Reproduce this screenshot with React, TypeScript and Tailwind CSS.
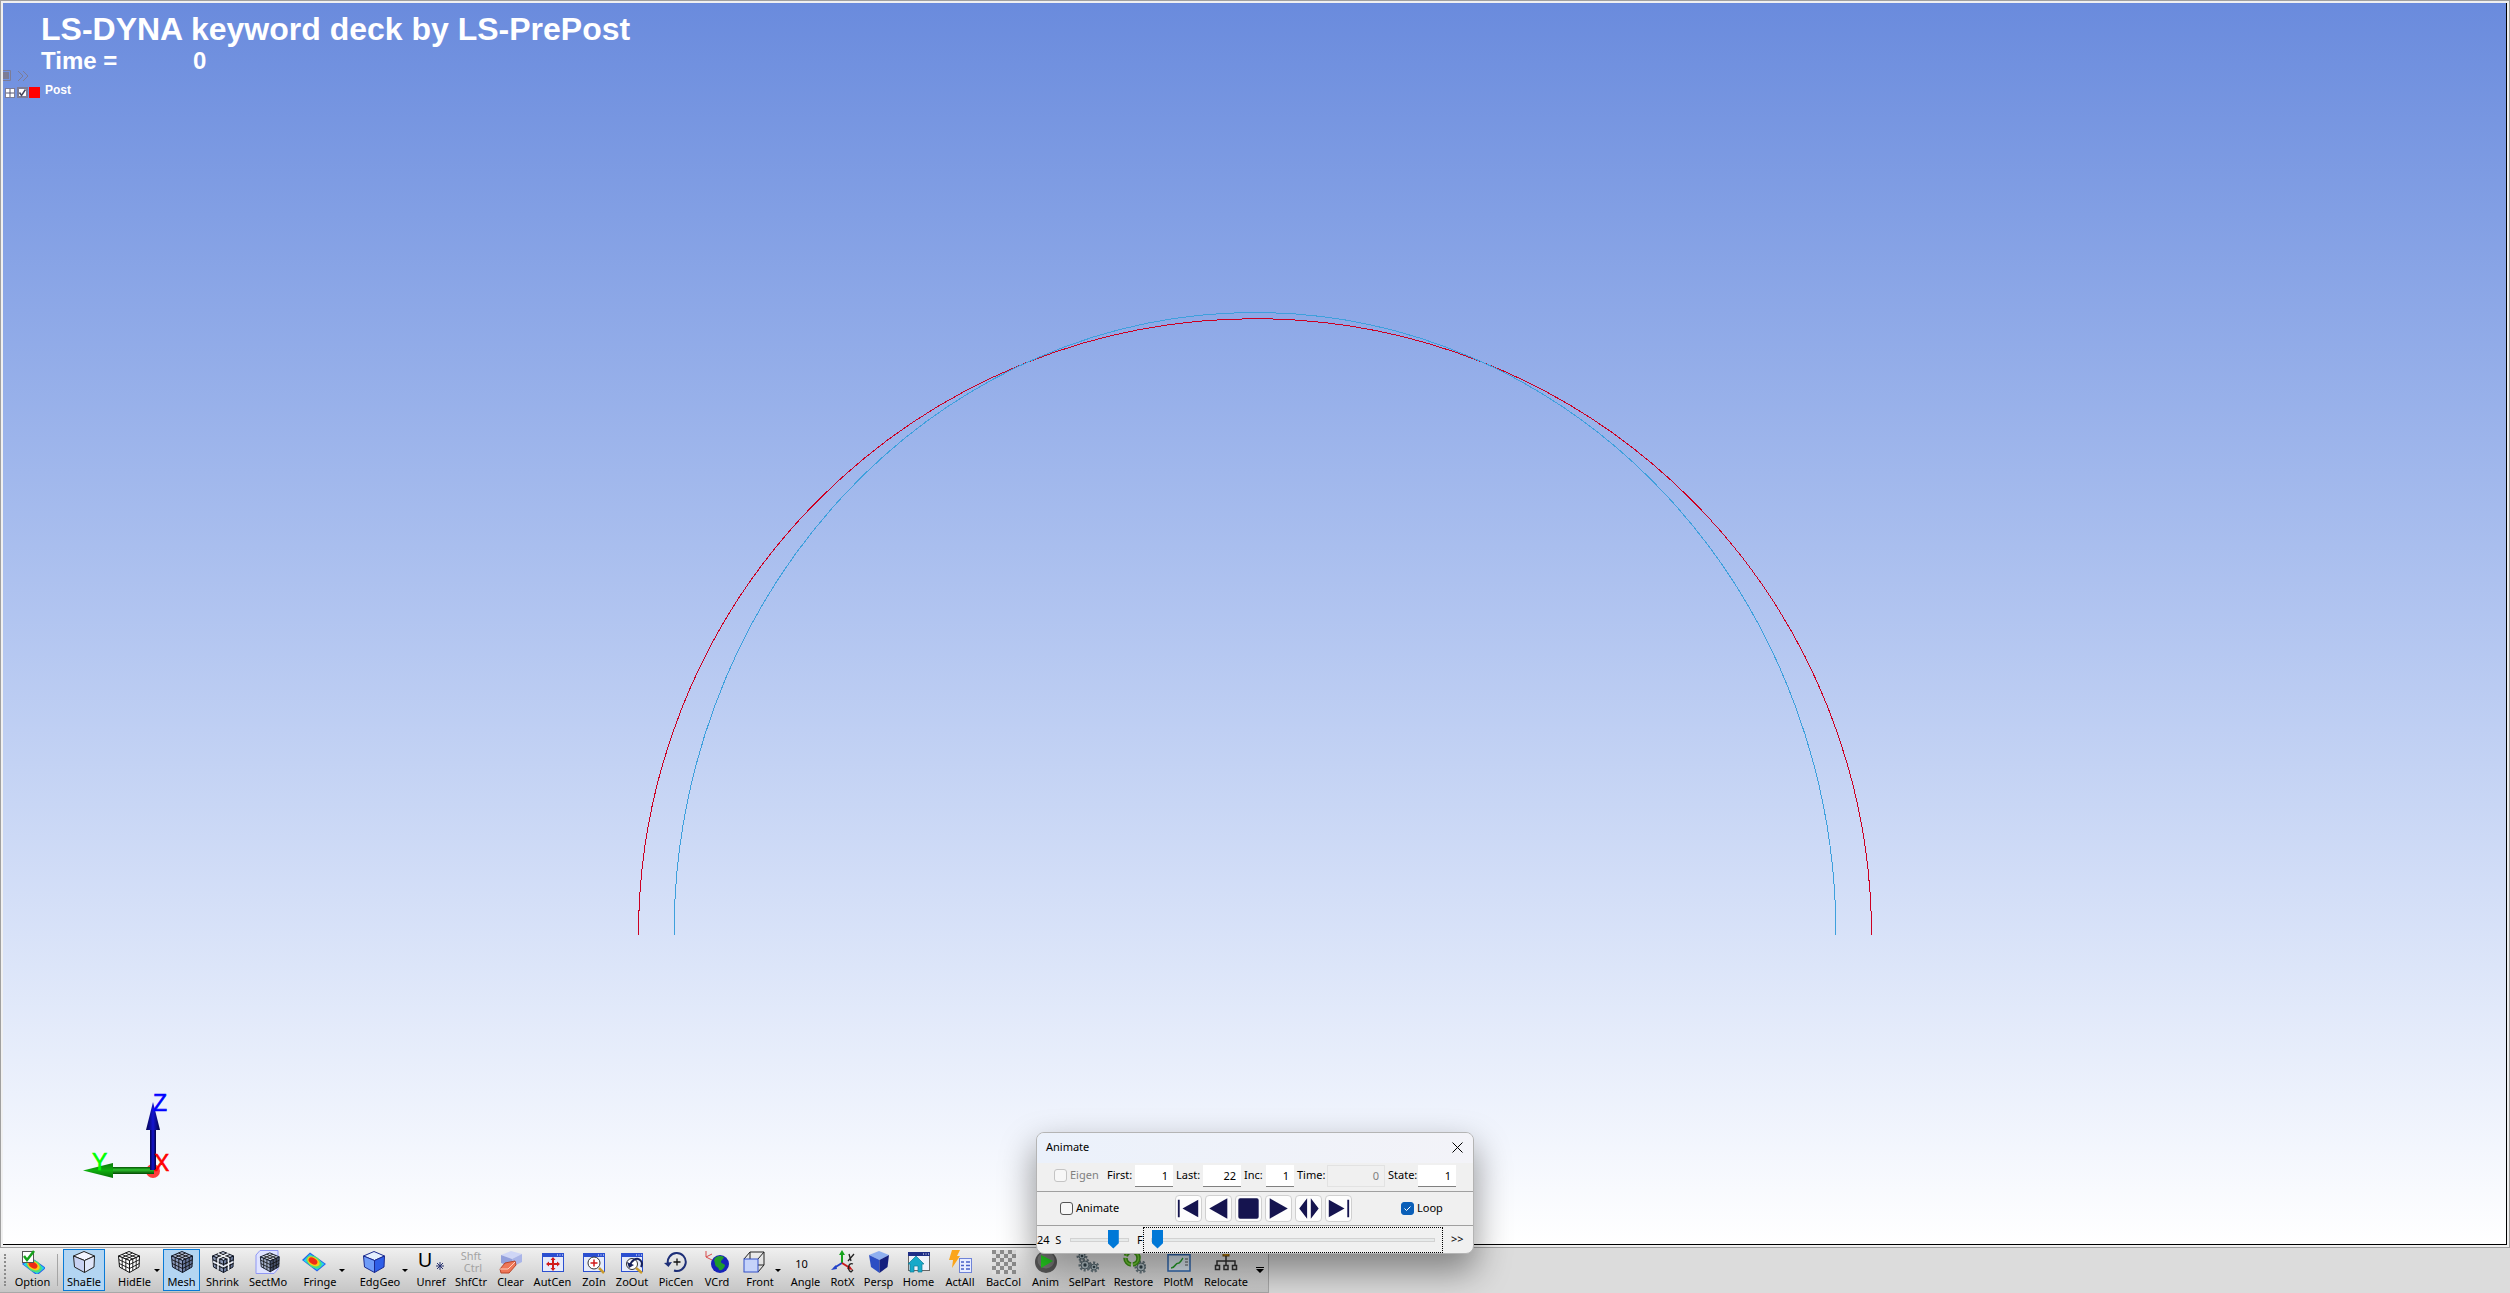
import React from "react";

type IconProps = { children: React.ReactNode };

function Svg({ children }: IconProps) {
  return (
    <svg viewBox="0 0 24 24" className="h-6 w-6" fill="none" aria-hidden="true">
      {children}
    </svg>
  );
}

function Cube({ top, left, right, line = "#111827" }: { top: string; left: string; right: string; line?: string }) {
  return (
    <g stroke={line} strokeWidth="1" strokeLinejoin="round">
      <path d="M12 1.500 22.500 6 12.500 10.500 1.500 6Z" fill={top} />
      <path d="M1.500 6 12.500 10.500V22.500L2.500 17Z" fill={left} />
      <path d="M22.500 6 12.500 10.500V22.500L22 17Z" fill={right} />
    </g>
  );
}

function CubeGrid({ line = "#111", width = 0.9 }: { line?: string; width?: number }) {
  return (
    <path
      d="M8.500 3 19.200 7.500V18.800M5 4.500 15.800 9V20.700M15.500 3 5.200 7.500V18.500M19 4.500 8.800 9V20.500M2 9.700l10.500 4.800 10-4.800M2 13.400l10.500 5.100 10-5.100"
      stroke={line}
      strokeWidth={width}
    />
  );
}

function FringePlate() {
  return (
    <g>
      <path d="M8 2.500 24 14 15 21.500 0 10Z" fill="#2563eb" />
      <path d="M8 4 22.500 14 15 20 1.500 10.500Z" fill="#22d3ee" />
      <ellipse cx="12" cy="12" rx="8.500" ry="5.500" fill="#4ade80" transform="rotate(32 12 12)" />
      <ellipse cx="11.500" cy="11.500" rx="6.800" ry="4.200" fill="#facc15" transform="rotate(32 11.500 11.500)" />
      <ellipse cx="11" cy="11" rx="4.800" ry="3" fill="#ef2b16" transform="rotate(32 11 11)" />
    </g>
  );
}

function WindowFrame({ ink }: { ink: string }) {
  return (
    <g>
      <rect x="1.500" y="3.500" width="21" height="18" fill="#e6ebfa" stroke={ink} />
      <rect x="1" y="3" width="22" height="4" fill={ink} />
      <path d="M16 5h1M18.500 5h1M21 5h1" stroke="#fff" />
    </g>
  );
}

function Gear({ x, y, r }: { x: number; y: number; r: number }) {
  return (
    <g>
      <circle cx={x} cy={y} r={r} fill="none" stroke="#6a7a82" strokeWidth="3" strokeDasharray="2 1.500" />
      <circle cx={x} cy={y} r={r - 1} fill="#b4c3c9" stroke="#5b6b73" />
      <circle cx={x} cy={y} r={r / 3} fill="#33434b" />
    </g>
  );
}

const icons: Record<string, React.ReactNode> = {
  Option: (
    <Svg>
      <g transform="translate(1 4)"><FringePlate /></g>
      <rect x="1.500" y="1.500" width="11" height="11" fill="#fff" stroke="#555" />
      <path d="m3 6 3 4 7-9" stroke="#16a31c" strokeWidth="2.500" />
    </Svg>
  ),
  ShaEle: <Svg><Cube top="#f1f4ff" left="#c9d2f2" right="#dfe5f8" line="#222" /></Svg>,
  HidEle: <Svg><Cube top="#fff" left="#fff" right="#fff" line="#111" /><CubeGrid /></Svg>,
  Mesh: <Svg><Cube top="#b3bdd6" left="#8c9abc" right="#66769c" /><CubeGrid /></Svg>,
  Shrink: (
    <Svg>
      <Cube top="#c3cce0" left="#8b99b8" right="#6d7c9f" />
      <CubeGrid />
      <path d="M7 3.500 17.500 8.500V20M17.500 3.500 7 8.500V20M2 11.700l10.500 4.800 10-4.800" stroke="#f3f4f6" strokeWidth="1.300" />
    </Svg>
  ),
  SectMo: (
    <svg viewBox="0 0 24 24" className="h-6 w-6 overflow-visible" fill="none" aria-hidden="true">
      <path d="M0 5 4 .5H22V19L18 23.500H0Z" fill="#dfe3ff" stroke="#8f97f5" />
      <g transform="translate(3 1.500) scale(.9)"><Cube top="#d3daea" left="#a4b0ca" right="#46506b" /><CubeGrid /></g>
    </svg>
  ),
  Fringe: <Svg><FringePlate /></Svg>,
  EdgGeo: <Svg><Cube top="#e4eefe" left="#6f9cf8" right="#2f5fe8" line="#1b2a8f" /></Svg>,
  Clear: (
    <Svg>
      <path d="M2 5 12 1l11 3-10 5Z" fill="#cfd6f6" />
      <path d="M2 5 13 9V17L2 13Z" fill="#93a0dc" />
      <path d="M13 9 23 4V12L13 17Z" fill="#aab5e8" />
      <path d="m6 13 10-2 1 4-7 8H2l-1-4Z" fill="#ee7759" stroke="#b8452b" />
      <path d="m1 19 8 0 7-7" stroke="#ffd0c0" />
    </Svg>
  ),
  AutCen: (
    <Svg>
      <WindowFrame ink="#2b4fd0" />
      <path d="M12 8v12M6 14h12" stroke="#d11a1a" strokeWidth="2" />
      <path d="m12 7 2.500 3h-5ZM12 21l2.500-3h-5ZM5 14l3-2.500v5ZM19 14l-3-2.500v5Z" fill="#d11a1a" />
    </Svg>
  ),
  ZoIn: (
    <Svg>
      <WindowFrame ink="#2b4fd0" />
      <circle cx="12" cy="13" r="6" fill="#fff" stroke="#333" />
      <path d="M12 9.500v7M8.500 13h7" stroke="#d11a1a" strokeWidth="1.500" />
      <path d="m17 18 5 5" stroke="#c99b2d" strokeWidth="2.500" />
    </Svg>
  ),
  ZoOut: (
    <Svg>
      <WindowFrame ink="#2b4fd0" />
      <circle cx="12" cy="14" r="5.500" fill="#fff" stroke="#333" />
      <path d="M10 16c1-6 7-9 10-6 3 2 2 5 1 7" stroke="#16205a" strokeWidth="2" />
      <path d="m7 12 2 6 5-3Z" fill="#16205a" />
      <path d="m16 18 6 5" stroke="#c99b2d" strokeWidth="2.500" />
    </Svg>
  ),
  PicCen: (
    <Svg>
      <path d="M4 14A9 9 0 1 1 10 20.500" stroke="#1e2f78" strokeWidth="2" />
      <path d="m0 13 8-1-3.500 5Z" fill="#1e2f78" />
      <path d="M13 8.500v7M9.500 12h7" stroke="#111" strokeWidth="1.300" />
    </Svg>
  ),
  VCrd: (
    <Svg>
      <path d="M1 1v6l8 4M1 7l6-3" stroke="#d94a4a" />
      <circle cx="15" cy="14" r="9" fill="#1723b8" />
      <path d="M10 8c3-3 7-2 9-1-1 3-3 3-3 5s4 1 4 4c-2 4-4 5-6 4 0-3-4-3-4-6s-2-3 0-6Z" fill="#1f9c2c" />
    </Svg>
  ),
  Front: (
    <Svg>
      <path d="m2 9 6-7h14v13l-6 7M16 9l6-7M8 2v13h14M8 15l-6 7" stroke="#222" />
      <rect x="2" y="9" width="14" height="13" fill="#c5d3fa" stroke="#3250c8" />
    </Svg>
  ),
  RotX: (
    <Svg>
      <path d="M11 13V3" stroke="#16a31c" strokeWidth="2" />
      <path d="m11 0 3 5H8Z" fill="#16a31c" />
      <path d="m11 13-8 5" stroke="#2342c9" strokeWidth="2" />
      <path d="m0 20 5-5 1 4Z" fill="#2342c9" />
      <path d="m11 13 8 5" stroke="#c91a1a" strokeWidth="2" />
      <path d="m22 20-6-1 2-4Z" fill="#c91a1a" />
      <path d="m18 4 2 7M23 4l-6 7M22 14c-5-2-6 6-2 8l2-2" stroke="#222" strokeWidth="1.300" />
    </Svg>
  ),
  Persp: (
    <Svg>
      <path d="M12 1 22 5 12.500 10 2 5Z" fill="#8fb0f0" />
      <path d="M2 5 12.500 10V23L4 17Z" fill="#2c4fc4" />
      <path d="M22 5 12.500 10V23L20.500 17Z" fill="#141f7d" />
    </Svg>
  ),
  Home: (
    <Svg>
      <rect x="1.500" y="2.500" width="21" height="18" fill="#eef1fa" stroke="#666" />
      <rect x="1" y="2" width="22" height="4" fill="#1d2d86" />
      <path d="M16 4h1M18.500 4h1M21 4h1" stroke="#fff" />
      <path d="M1 14 9 6l8 8h-2v8h-4v-6H7v6H3v-8Z" fill="#16a9c9" stroke="#0e7894" strokeWidth=".7" />
    </Svg>
  ),
  ActAll: (
    <Svg>
      <path d="m4 0 8 0-3 6h3L4 18l1-8H1Z" fill="#fba51c" />
      <rect x="11.500" y="8.500" width="12" height="14" fill="#e7ecff" stroke="#6f83d8" />
      <path d="M13 12h3M18 12h4M13 15.500h3M18 15.500h4M13 19h3M18 19h4" stroke="#4a60c8" strokeWidth="1.500" />
    </Svg>
  ),
  BacCol: (
    <svg viewBox="0 0 24 24" className="h-6 w-6" aria-hidden="true">
      <defs>
        <pattern id="checker" width="8" height="8" patternUnits="userSpaceOnUse">
          <rect width="8" height="8" fill="#dedede" />
          <rect width="4" height="4" fill="#8c8c8c" />
          <rect x="4" y="4" width="4" height="4" fill="#8c8c8c" />
        </pattern>
      </defs>
      <rect width="24" height="24" fill="url(#checker)" />
    </svg>
  ),
  Anim: (
    <Svg>
      <circle cx="12" cy="12" r="11" fill="#5b5b5b" />
      <circle cx="12" cy="10" r="8.500" fill="#7b7b7b" />
      <path d="m7 5 12 6-12 7Z" fill="#25d321" />
    </Svg>
  ),
  SelPart: <Svg><Gear x={7} y={6} r={4} /><Gear x={10} y={15} r={5} /><Gear x={19} y={17} r={4} /></Svg>,
  Restore: (
    <Svg>
      <Gear x={19} y={17} r={5} />
      <circle cx="10" cy="8" r="6.500" stroke="#3f9a16" strokeWidth="4.500" strokeDasharray="9 2" />
      <circle cx="10" cy="8" r="6.500" stroke="#7ad13c" strokeWidth="1.500" strokeDasharray="9 2" />
    </Svg>
  ),
  PlotM: (
    <Svg>
      <rect x="1" y="3" width="22" height="18" fill="#dfeaf3" stroke="#3069b4" strokeWidth="1.500" />
      <path d="M1 4h22" stroke="#3069b4" strokeWidth="3" />
      <path d="M4 18c5 0 3-5 8-5 2-1 3-4 4-5" stroke="#27a12b" strokeWidth="1.500" />
      <path d="M18 9h3M18 12h3M18 15h3" stroke="#555" />
    </Svg>
  ),
  Relocate: (
    <Svg>
      <rect x="9" y="1" width="6" height="5" fill="#c98a12" stroke="#7a5208" />
      <path d="M12 6v9M3 15v-4h18v4" stroke="#333" strokeWidth="1.500" />
      <path d="M1.500 15.500h4v4h-4ZM10 15.500h4v4h-4ZM18.500 15.500h4v4h-4Z" stroke="#333" strokeWidth="1.500" />
    </Svg>
  ),
  Unref: (
    <span className="flex h-6 items-start text-xl leading-5 text-black">
      U
      <svg viewBox="0 0 8 8" className="mt-3 ml-1 h-2 w-2" aria-hidden="true">
        <path d="M4 0v8M0 4h8M1 1l6 6M7 1 1 7" stroke="#26316f" />
      </svg>
    </span>
  ),
  ShfCtr: (
    <span className="flex h-6 flex-col text-[11px] leading-3 text-[#a3a3a3]">
      <span>Shft</span>
      <span className="pl-1">Ctrl</span>
    </span>
  ),
  Angle: <span className="h-6 pr-2 text-[11px] leading-5">10</span>,
};

type Tool = { name: string; width: string; on?: boolean; menu?: string };

const tools: Tool[] = [
  { name: "ShaEle", width: "w-[42px]", on: true },
  { name: "HidEle", width: "w-[39px]", menu: "w-[58px]" },
  { name: "Mesh", width: "w-[37px]", on: true },
  { name: "Shrink", width: "w-[45px]" },
  { name: "SectMo", width: "w-[46px]" },
  { name: "Fringe", width: "w-[38px]", menu: "w-[57px]" },
  { name: "EdgGeo", width: "w-[44px]", menu: "w-[65px]" },
  { name: "Unref", width: "w-[36px]" },
  { name: "ShfCtr", width: "w-[44px]" },
  { name: "Clear", width: "w-[35px]" },
  { name: "AutCen", width: "w-[49px]" },
  { name: "ZoIn", width: "w-[34px]" },
  { name: "ZoOut", width: "w-[42px]" },
  { name: "PicCen", width: "w-[46px]" },
  { name: "VCrd", width: "w-[36px]" },
  { name: "Front", width: "w-[30px]", menu: "w-[51px]" },
  { name: "Angle", width: "w-[39px]" },
  { name: "RotX", width: "w-[35px]" },
  { name: "Persp", width: "w-[37px]" },
  { name: "Home", width: "w-[43px]" },
  { name: "ActAll", width: "w-[40px]" },
  { name: "BacCol", width: "w-[47px]" },
  { name: "Anim", width: "w-[37px]" },
  { name: "SelPart", width: "w-[46px]" },
  { name: "Restore", width: "w-[47px]" },
  { name: "PlotM", width: "w-[43px]" },
  { name: "Relocate", width: "w-[52px]" },
];

function ToolButton({ tool }: { tool: Tool }) {
  const button = (
    <button
      type="button"
      aria-pressed={tool.on}
      className={`flex h-[42px] shrink-0 flex-col items-center justify-center border ${tool.width} ${
        tool.on ? "border-[#0a7ad6] bg-[#b3d5f2]" : "border-transparent"
      }`}
    >
      <span className={tool.menu ? "mr-3" : ""}>{icons[tool.name]}</span>
      <span className="text-[11px] leading-4 whitespace-nowrap">{tool.name}</span>
    </button>
  );
  if (!tool.menu) return button;
  return (
    <div className={`flex shrink-0 items-center pl-[10px] ${tool.menu}`}>
      {button}
      <button type="button" aria-label={`${tool.name} menu`} className="flex w-[6px] shrink-0 justify-center">
        <svg viewBox="0 0 6 3" className="h-[3px] w-[6px]" aria-hidden="true"><path d="M0 0h6L3 3Z" fill="#000" /></svg>
      </button>
    </div>
  );
}

function Toolbar() {
  return (
    <div role="toolbar" aria-label="View tools" className="flex h-[45px] shrink-0 bg-[#dcdcdc]">
      <div className="flex items-center border-r border-b border-[#a8a8a8] bg-linear-to-b from-[#f0f0f0] to-[#c6c6c6] pl-1">
        <div className="mr-[6px] h-8 w-[3px] border-l-2 border-dotted border-[#8b8b8b]" />
        <ToolButton tool={{ name: "Option", width: "w-[39px]" }} />
        <div className="mx-[5px] h-8 w-px bg-[#a5a5a5]" />
        {tools.map((tool) => (
          <ToolButton key={tool.name} tool={tool} />
        ))}
        <button type="button" aria-label="More tools" className="flex w-4 shrink-0 justify-center">
          <svg viewBox="0 0 8 6" className="h-[6px] w-2" aria-hidden="true">
            <path d="M0 0h8v1H0ZM0 2h8L4 6Z" fill="#000" />
          </svg>
        </button>
      </div>
    </div>
  );
}

function Axes() {
  return (
    <svg viewBox="60 1080 130 110" className="absolute bottom-[54px] left-[57px] h-[110px] w-[130px]" role="img" aria-label="Coordinate axes">
      <defs>
        <linearGradient id="shaftY" x1="0" y1="0" x2="0" y2="1">
          <stop offset="0" stopColor="#045404" /><stop offset=".4" stopColor="#2fc02f" /><stop offset="1" stopColor="#034803" />
        </linearGradient>
        <linearGradient id="headY" x1="0" y1="0" x2="0" y2="1">
          <stop offset="0" stopColor="#0a7a0a" /><stop offset=".5" stopColor="#0fae0f" /><stop offset="1" stopColor="#067006" />
        </linearGradient>
        <linearGradient id="shaftZ" x1="0" y1="0" x2="1" y2="0">
          <stop offset="0" stopColor="#04044e" /><stop offset=".5" stopColor="#1414d0" /><stop offset="1" stopColor="#03033e" />
        </linearGradient>
      </defs>
      <circle cx="153" cy="1171" r="7" fill="#ff3d3d" />
      <rect x="112" y="1167" width="42" height="7" fill="url(#shaftY)" />
      <path d="M83 1170.500 113 1163V1178Z" fill="url(#headY)" />
      <rect x="150" y="1129" width="6" height="41" fill="url(#shaftZ)" />
      <path d="M153 1102 160 1130H146Z" fill="url(#shaftZ)" />
      <g fontFamily="Liberation Sans, sans-serif" fontSize="23" fontWeight="400" strokeWidth=".6">
        <text x="153" y="1111" fill="#00f" stroke="#00f">Z</text>
        <text x="92" y="1170" fill="#0f0" stroke="#0f0">Y</text>
        <text x="154" y="1171" fill="#f00" stroke="#f00">X</text>
      </g>
    </svg>
  );
}

function Viewport() {
  return (
    <main className="flex min-h-0 flex-1 border border-[#a0a0a0] bg-[#f0f0f0] p-[2px]">
      <div className="relative flex-1 overflow-hidden border-r border-b border-black bg-linear-to-b from-[#6a8bdd] to-white font-['Liberation_Sans',sans-serif] font-bold text-white">
        <svg viewBox="0 0 2503 1241" className="absolute inset-0 h-full w-full" role="img" aria-label="Arch mesh and its deformed shape">
          <g fill="none" shapeRendering="crispEdges">
            <path d="M635.500 932A616.500 616.500 0 0 1 1868.500 932" stroke="#cc0022" />
            <path d="M671 932A581 622.500 0 0 1 1833 932" stroke="#3ea0dc" />
          </g>
        </svg>
        <header className="relative pt-2 pl-[38px]">
          <h1 className="text-[32px] leading-9">LS-DYNA keyword deck by LS-PrePost</h1>
          <p className="flex text-2xl leading-7">
            <span className="w-[152px]">Time =</span>
            <span>0</span>
          </p>
        </header>
        <Tree />
        <Axes />
      </div>
    </main>
  );
}

function Tree() {
  return (
    <div className="absolute top-[67px] left-0 flex flex-col gap-1">
      <svg viewBox="0 0 28 12" className="h-3 w-7" fill="none" stroke="#7c7c96" aria-hidden="true">
        <path d="M0 .5h7.500v10H0" />
        <rect x="0" y="2" width="6" height="7" fill="#7c7c96" stroke="none" />
        <path d="m15 1 5 5-5 5M20 1l5 5-5 5" />
      </svg>
      <div className="flex items-start">
        <button type="button" aria-label="Expand Post" className="ml-[2px] pt-[2px]">
          <svg viewBox="0 0 10 10" className="h-[10px] w-[10px]" aria-hidden="true">
            <rect x=".5" y=".5" width="9" height="9" fill="#fff" stroke="#7c7c96" />
            <path d="M5 1v8M1 5h8" stroke="#555570" />
          </svg>
        </button>
        <label className="flex items-start">
          <span className="relative mt-px ml-[2px] flex">
            <input
              type="checkbox"
              defaultChecked
              className="h-[11px] w-[11px] appearance-none border-2 border-[#7c7c96] bg-white"
            />
            <svg viewBox="0 0 11 11" className="pointer-events-none absolute inset-0" fill="none" aria-hidden="true">
              <path d="m2.500 5.500 2 3 4-6" stroke="#44445c" strokeWidth="1.500" />
            </svg>
          </span>
          <span className="mt-px ml-px h-[11px] w-[11px] bg-[#f00]" />
          <span className="pl-[5px] text-xs leading-3">
            <span className="-mt-[2px] block">Post</span>
          </span>
        </label>
      </div>
    </div>
  );
}

function Field({ label, value, labelWidth, width, disabled }: { label: string; value: string; labelWidth: string; width: string; disabled?: boolean }) {
  return (
    <label className="mr-[3px] flex items-center">
      <span className={`${labelWidth} whitespace-nowrap`}>{label}</span>
      <input
        defaultValue={value}
        disabled={disabled}
        className={`h-[22px] pr-[5px] text-right ${width} ${
          disabled ? "border border-[#e2e2e2] bg-[#f0f0f0] text-[#808080]" : "border-b border-[#808080] bg-white"
        }`}
      />
    </label>
  );
}

function TickBox({ label, checked, disabled }: { label: string; checked?: boolean; disabled?: boolean }) {
  return (
    <label className={`flex items-center gap-[3px] ${disabled ? "text-[#808080]" : ""}`}>
      <span className="relative flex">
        <input
          type="checkbox"
          defaultChecked={checked}
          disabled={disabled}
          className="h-[13px] w-[13px] appearance-none rounded-[3px] border border-[#555] bg-[#f7f7f7] checked:border-[#0a5fb8] checked:bg-[#0a5fb8] disabled:border-[#c4c4c4]"
        />
        {checked && (
          <svg viewBox="0 0 13 13" className="pointer-events-none absolute inset-0" fill="none" aria-hidden="true">
            <path d="m3.500 6.500 2 2 4-4" stroke="#fff" />
          </svg>
        )}
      </span>
      {label}
    </label>
  );
}

const transport = [
  { label: "First frame", path: "M2 4h2v19H2ZM24 4v19L7 13.500Z" },
  { label: "Play backward", path: "M23 2.500v22L3.500 13.500Z" },
  { label: "Stop", path: "M4.500 2.500h18a2 2 0 0 1 2 2v18a2 2 0 0 1-2 2H4.500a2 2 0 0 1-2-2V4.500a2 2 0 0 1 2-2Z" },
  { label: "Play forward", path: "M4 2.500v22L23.500 13.500Z" },
  { label: "Play both ways", path: "M12 2.500v22L3.500 13.500ZM16 2.500v22l8.500-11Z" },
  { label: "Last frame", path: "M23 4h2v19h-2ZM3 4v19l17-9.500Z" },
];

function Slider({ label, value, className }: { label: string; value: number; className: string }) {
  return (
    <input
      type="range"
      aria-label={label}
      defaultValue={value}
      className={`h-5 appearance-none bg-transparent [&::-webkit-slider-runnable-track]:h-[4px] [&::-webkit-slider-runnable-track]:border [&::-webkit-slider-runnable-track]:border-[#d2d2d2] [&::-webkit-slider-runnable-track]:bg-[#e7eaea] [&::-webkit-slider-thumb]:mt-[-9px] [&::-webkit-slider-thumb]:h-[19px] [&::-webkit-slider-thumb]:w-[11px] [&::-webkit-slider-thumb]:appearance-none [&::-webkit-slider-thumb]:bg-[#0078d7] [&::-webkit-slider-thumb]:[clip-path:polygon(0_0,100%_0,100%_72%,50%_100%,0_72%)] ${className}`}
    />
  );
}

function AnimateDialog() {
  return (
    <section
      role="dialog"
      aria-label="Animate"
      className="absolute bottom-[39px] left-[1036px] flex w-[438px] flex-col overflow-hidden rounded-lg border border-[#b4b4b4] bg-[#f0f0f0] text-[11px] shadow-[0_16px_34px_2px_rgba(0,0,0,0.4)]"
    >
      <div className="flex h-[30px] items-center justify-between bg-linear-to-r from-[#ebf1fb] to-[#f3f3f8] pr-[10px] pb-px pl-[9px]">
        <h2 className="text-[11px]">Animate</h2>
        <button type="button" aria-label="Close">
          <svg viewBox="0 0 11 11" className="h-[11px] w-[11px]" aria-hidden="true">
            <path d="m.5.5 10 10m0-10-10 10" stroke="#000" />
          </svg>
        </button>
      </div>
      <div className="flex h-[29px] items-center border-b border-[#a0a0a0] pb-[3px] pl-[17px]">
        <div className="w-[53px]"><TickBox label="Eigen" disabled /></div>
        <Field label="First:" value="1" labelWidth="w-7" width="w-[38px]" />
        <Field label="Last:" value="22" labelWidth="w-[27px]" width="w-[38px]" />
        <Field label="Inc:" value="1" labelWidth="w-[22px]" width="w-7" />
        <Field label="Time:" value="0" labelWidth="w-[30px]" width="w-[58px]" disabled />
        <Field label="State:" value="1" labelWidth="w-[30px]" width="w-[38px]" />
      </div>
      <div className="flex h-[34px] items-center border-b border-[#a0a0a0] pl-[23px]">
        <div className="w-[115px]"><TickBox label="Animate" /></div>
        <div className="mr-[49px] flex gap-[3px]">
          {transport.map((item) => (
            <button key={item.label} type="button" aria-label={item.label} className="rounded-sm border border-[#d0d0d0] bg-[#fdfdfd]">
              <svg viewBox="0 0 27 27" className="h-[25px] w-[25px]" aria-hidden="true"><path d={item.path} fill="#15144f" /></svg>
            </button>
          ))}
        </div>
        <TickBox label="Loop" checked />
      </div>
      <div className="flex h-[27px] items-center">
        <span className="w-[33px] pt-px whitespace-pre">24  S</span>
        <Slider label="Speed" value={80} className="w-[59px]" />
        <span className="w-[14px] pt-px pl-2">F</span>
        <div className="flex h-[26px] w-[300px] items-center border border-dotted border-black px-[7px]">
          <Slider label="State" value={0} className="w-full" />
        </div>
        <button type="button" className="pb-px pl-2">&gt;&gt;</button>
      </div>
    </section>
  );
}

export default function App() {
  return (
    <div className="relative flex h-screen flex-col overflow-hidden bg-[#dcdcdc] font-['Noto_Sans',sans-serif] text-black">
      <Viewport />
      <Toolbar />
      <AnimateDialog />
    </div>
  );
}
